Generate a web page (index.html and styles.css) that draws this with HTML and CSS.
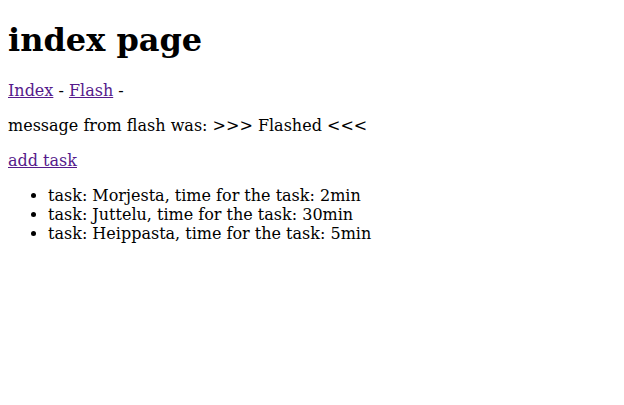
FILE: index.html
```html
<!DOCTYPE html>
<html>
<head>
<meta charset="utf-8">
<title>index page</title>
<link rel="stylesheet" href="styles.css">
</head>
<body class="page">
<h1 class="title">index page</h1>
<p class="nav"><a class="link" href="#index">Index</a> - <a class="link" href="#flash">Flash</a> - </p>
<p class="message">message from flash was: &gt;&gt;&gt; Flashed &lt;&lt;&lt;</p>
<p class="action"><a class="link" href="#add">add task</a></p>
<ul class="tasks">
<li class="task">task: Morjesta, time for the task: 2min</li>
<li class="task">task: Juttelu, time for the task: 30min</li>
<li class="task">task: Heippasta, time for the task: 5min</li>
</ul>
</body>
</html>
```
FILE: styles.css
```css
.page {
  font-family: "DejaVu Serif", serif;
  color: #000;
  background: #fff;
  margin: 0 8px 8px;
}
.link {
  color: #551a8b;
}
```
